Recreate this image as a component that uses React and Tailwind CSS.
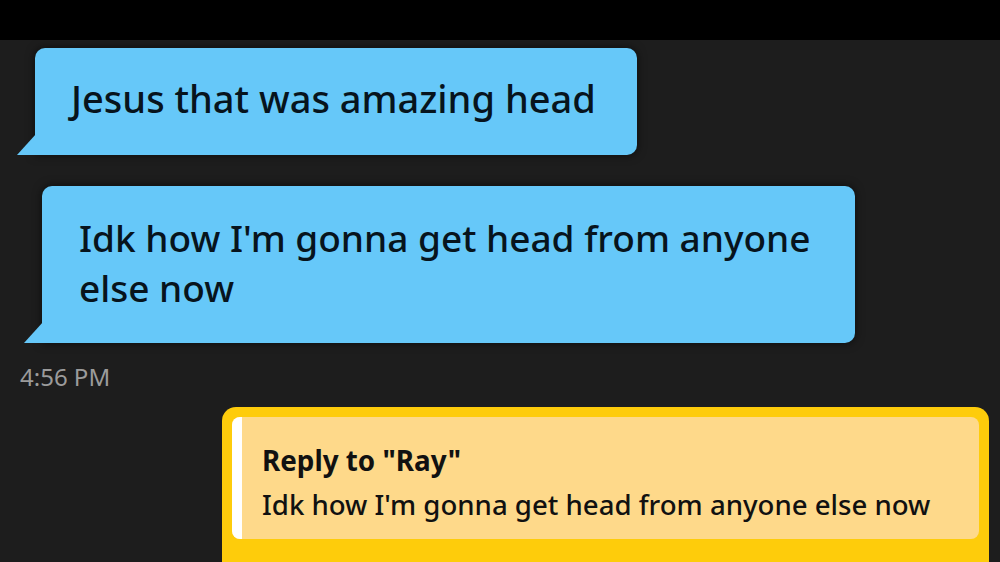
const font = { fontFamily: '"Noto Sans", "Open Sans", sans-serif' };

function Tail({ color }) {
  // little wedge that sticks out of the bottom-left corner of a bubble
  return (
    <svg
      className="absolute bottom-0 -left-[18px]"
      width="19"
      height="21"
      viewBox="0 0 19 21"
    >
      <polygon points="19,0 0,21 19,21" fill={color} />
    </svg>
  );
}

function IncomingBubble({ children, className }) {
  return (
    <div
      className={`relative rounded-[10px] rounded-bl-none bg-[#66c8f9] text-[#07141d] shadow-[0_0_10px_rgba(0,0,0,0.6)] ${className}`}
    >
      <Tail color="#66c8f9" />
      {children}
    </div>
  );
}

export default function App() {
  return (
    <div
      className="w-[1000px] h-[562px] overflow-hidden bg-[#1d1d1d] flex flex-col"
      style={font}
    >
      <div className="h-10 bg-black shrink-0" />

      <div className="flex flex-col">
        <IncomingBubble className="ml-[35px] mt-2 w-[602px] h-[107px] pl-[36px] pt-[25px]">
          <p className="text-[38px] leading-[50px] font-medium">Jesus that was amazing head</p>
        </IncomingBubble>

        <IncomingBubble className="ml-[42px] mt-[31px] w-[813px] h-[157px] pl-[37px] pt-[27px]">
          <p className="text-[37px] leading-[50px] font-medium">
            Idk how I'm gonna get head from anyone
            <br />
            else now
          </p>
        </IncomingBubble>

        <p className="ml-5 mt-[19px] text-[24px] leading-[30px] text-[#9b9b9b]">4:56 PM</p>

        <div className="self-end mr-[11px] mt-[15px] w-[767px] h-[170px] rounded-[14px] bg-[#fecc0b] p-[10px]">
          <div className="flex h-[122px] rounded-[8px] overflow-hidden bg-[#fed98a]">
            <div className="w-[10px] bg-white shrink-0" />
            <div className="pl-5 pt-[21px] text-[#111]">
              <p className="text-[27.8px] leading-[44px] font-bold">Reply to "Ray"</p>
              <p className="text-[27.6px] leading-[44px] font-medium">
                Idk how I'm gonna get head from anyone else now
              </p>
            </div>
          </div>
        </div>
      </div>
    </div>
  );
}
